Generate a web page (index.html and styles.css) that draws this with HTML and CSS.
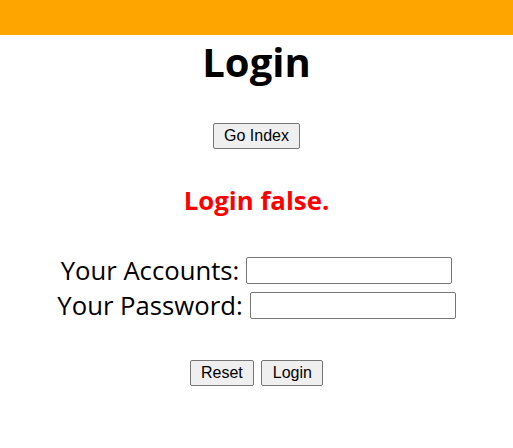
FILE: index.html
```html
<!DOCTYPE html>
<html>
<head>
<meta charset="utf-8">
<link rel="stylesheet" href="styles.css">
</head>
<body>
<div class="topbar"></div>
<h1 class="title">Login</h1>
<div class="nav"><button class="btn" type="button">Go Index</button></div>
<h2 class="error">Login false.</h2>
<form class="form">
  <div class="row"><label class="label">Your Accounts:</label><input class="field" type="text"></div>
  <div class="row"><label class="label">Your Password:</label><input class="field" type="password"></div>
  <div class="actions"><button class="btn" type="reset">Reset</button><button class="btn" type="button">Login</button></div>
</form>
</body>
</html>
```
FILE: styles.css
```css
body {
  margin: 0;
  font-family: "Open Sans", "Noto Sans", sans-serif;
  background: #fff;
  color: #000;
}
.topbar {
  height: 35px;
  background: #ffa500;
}
.title {
  margin: 0;
  text-align: center;
  font-size: 40px;
  font-weight: 700;
  line-height: 54px;
}
.nav {
  display: flex;
  justify-content: center;
  margin-top: 34px;
}
.btn {
  font-family: "Liberation Sans", Arial, sans-serif;
  font-size: 16px;
  height: 26px;
  padding: 1px 10.5px;
  border: 1px solid #767676;
  border-radius: 2px;
  background: #efefef;
  color: #000;
}
.error {
  margin: 35px 0 0;
  text-align: center;
  color: #ff0000;
  font-size: 25.8px;
  font-weight: 700;
  line-height: 32px;
}
.form {
  margin-top: 37px;
  display: flex;
  flex-direction: column;
  align-items: center;
}
.row {
  display: flex;
  align-items: center;
  gap: 7px;
  height: 35px;
}
.label {
  font-size: 25.7px;
}
.field {
  width: 206px;
  height: 27px;
  box-sizing: border-box;
  border: 1px solid #767676;
  border-radius: 2px;
  padding: 2px;
}
.actions {
  display: flex;
  gap: 7px;
  margin-top: 37px;
}
```
